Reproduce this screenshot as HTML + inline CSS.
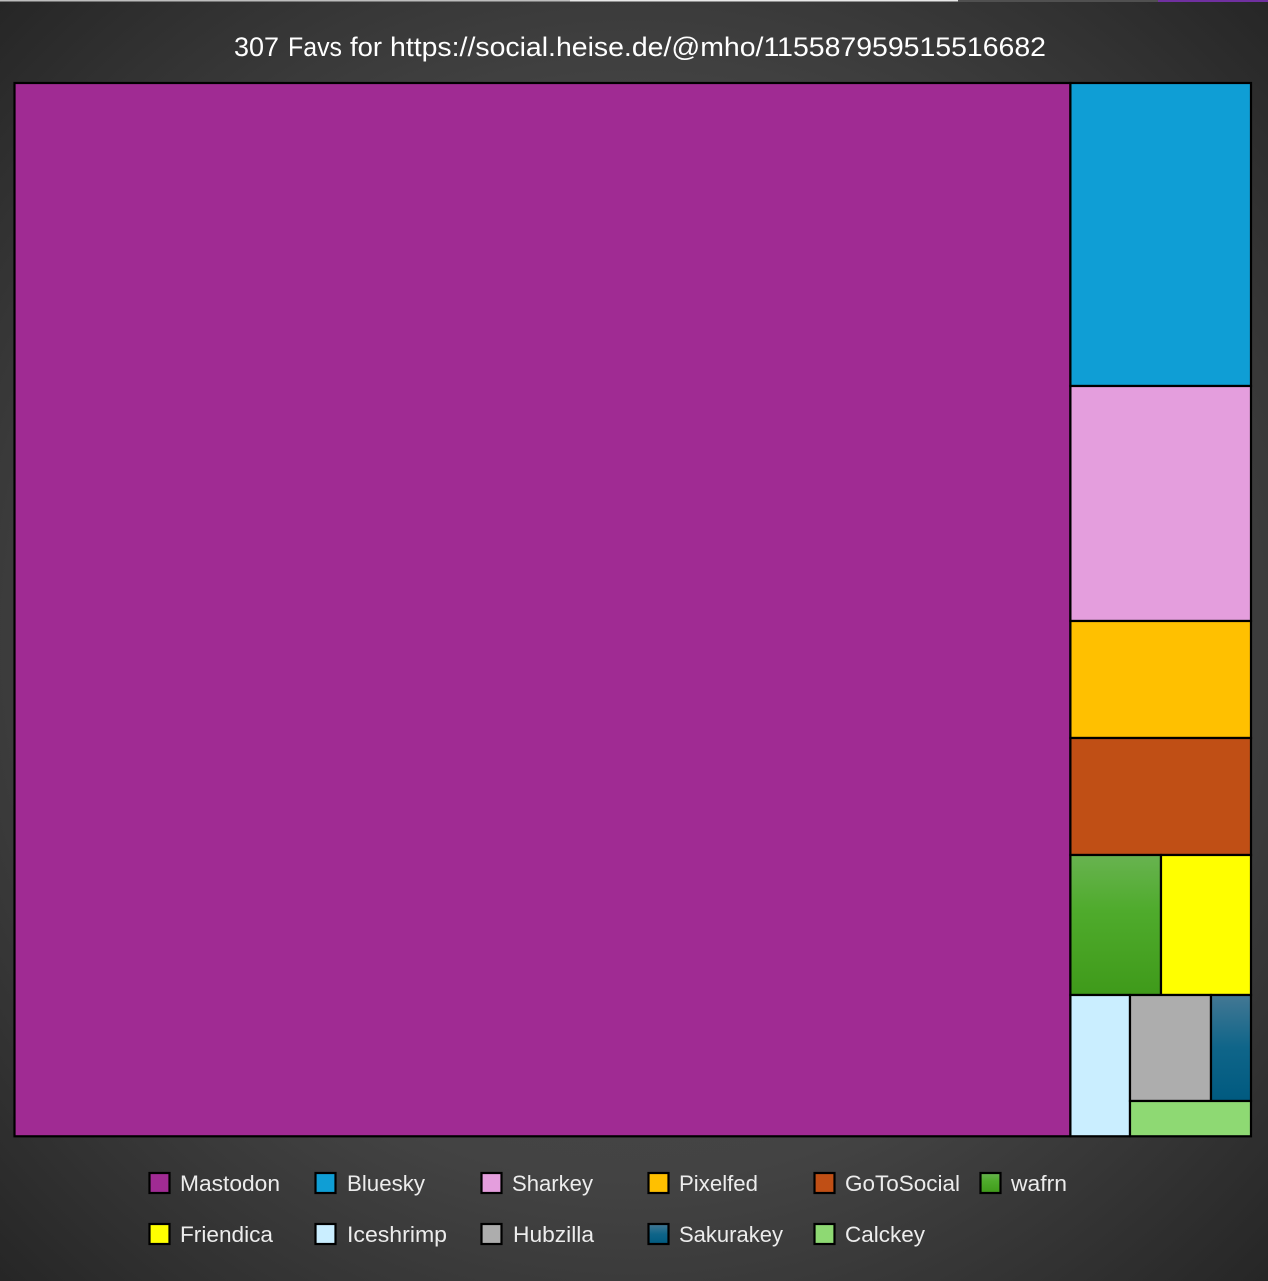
<!DOCTYPE html>
<html lang="en">
<head>
<meta charset="utf-8">
<title>307 Favs</title>
<style>
html,body{margin:0;padding:0;width:1268px;height:1281px;overflow:hidden;background:#3a3a3a}
svg{display:block}
text{font-family:"Liberation Sans",sans-serif;fill:#fff}
.l{font-size:22px;fill:#ececec}
.s{stroke:#000;stroke-width:2.2}
</style>
</head>
<body>
<svg width="1268" height="1281" viewBox="0 0 1268 1281" xmlns="http://www.w3.org/2000/svg">
<defs>
<radialGradient id="bg" gradientUnits="userSpaceOnUse" cx="634" cy="640" r="900">
<stop offset="0" stop-color="#4a4a4a"/>
<stop offset="0.6" stop-color="#434343"/>
<stop offset="1" stop-color="#262626"/>
</radialGradient>
<linearGradient id="gr" x1="0" y1="0" x2="0" y2="1">
<stop offset="0" stop-color="#68b350"/>
<stop offset="0.4" stop-color="#4fab2c"/>
<stop offset="1" stop-color="#3f9a1a"/>
</linearGradient>
<linearGradient id="bl" x1="0" y1="0" x2="0" y2="1">
<stop offset="0" stop-color="#447894"/>
<stop offset="0.5" stop-color="#0f6589"/>
<stop offset="1" stop-color="#005a80"/>
</linearGradient>
</defs>
<rect width="1268" height="1281" fill="url(#bg)"/>
<rect x="0" y="0" width="570" height="1.5" fill="#bdbdbd"/>
<rect x="570" y="0" width="388" height="1.5" fill="#e8e8e8"/>
<rect x="958" y="0" width="200" height="2" fill="#505050"/>
<rect x="1158" y="0" width="110" height="2" fill="#7030a0"/>

<text x="234" y="56" font-size="27" textLength="45" lengthAdjust="spacingAndGlyphs">307</text>
<text x="288" y="56" font-size="27" textLength="54" lengthAdjust="spacingAndGlyphs">Favs</text>
<text x="350" y="56" font-size="27" textLength="32" lengthAdjust="spacingAndGlyphs">for</text>
<text x="390" y="56" font-size="27" textLength="656" lengthAdjust="spacingAndGlyphs">https://social.heise.de/@mho/115587959515516682</text>

<rect class="s" x="14.500" y="83" width="1055.900" height="1053.300" fill="#a02b93"/>
<rect class="s" x="1070.400" y="83" width="180.600" height="303" fill="#0f9ed5"/>
<rect class="s" x="1070.400" y="386" width="180.600" height="235" fill="#e49edd"/>
<rect class="s" x="1070.400" y="621" width="180.600" height="117" fill="#ffc000"/>
<rect class="s" x="1070.400" y="738" width="180.600" height="117" fill="#c04f15"/>
<rect class="s" x="1070.400" y="855" width="90.600" height="140" fill="url(#gr)"/>
<rect class="s" x="1161" y="855" width="90" height="140" fill="#ffff00"/>
<rect class="s" x="1070.400" y="995" width="59.600" height="141.300" fill="#caeeff"/>
<rect class="s" x="1130" y="995" width="81" height="106" fill="#adadad"/>
<rect class="s" x="1211" y="995" width="40" height="106" fill="url(#bl)"/>
<rect class="s" x="1130" y="1101" width="121" height="35.300" fill="#8ed973"/>

<rect class="s" x="149.500" y="1173" width="20" height="20" fill="#a02b93"/>
<text class="l" x="180" y="1191" textLength="100" lengthAdjust="spacingAndGlyphs">Mastodon</text>
<rect class="s" x="315.500" y="1173" width="20" height="20" fill="#0f9ed5"/>
<text class="l" x="347" y="1191" textLength="78" lengthAdjust="spacingAndGlyphs">Bluesky</text>
<rect class="s" x="481.500" y="1173" width="20" height="20" fill="#e49edd"/>
<text class="l" x="512" y="1191" textLength="81" lengthAdjust="spacingAndGlyphs">Sharkey</text>
<rect class="s" x="648.500" y="1173" width="20" height="20" fill="#ffc000"/>
<text class="l" x="679" y="1191" textLength="79" lengthAdjust="spacingAndGlyphs">Pixelfed</text>
<rect class="s" x="814.500" y="1173" width="20" height="20" fill="#c04f15"/>
<text class="l" x="845" y="1191" textLength="115" lengthAdjust="spacingAndGlyphs">GoToSocial</text>
<rect class="s" x="980.500" y="1173" width="20" height="20" fill="url(#gr)"/>
<text class="l" x="1011" y="1191" textLength="56" lengthAdjust="spacingAndGlyphs">wafrn</text>

<rect class="s" x="149.500" y="1224" width="20" height="20" fill="#ffff00"/>
<text class="l" x="180" y="1242" textLength="93" lengthAdjust="spacingAndGlyphs">Friendica</text>
<rect class="s" x="315.500" y="1224" width="20" height="20" fill="#caeeff"/>
<text class="l" x="347" y="1242" textLength="100" lengthAdjust="spacingAndGlyphs">Iceshrimp</text>
<rect class="s" x="481.500" y="1224" width="20" height="20" fill="#adadad"/>
<text class="l" x="513" y="1242" textLength="81" lengthAdjust="spacingAndGlyphs">Hubzilla</text>
<rect class="s" x="648.500" y="1224" width="20" height="20" fill="url(#bl)"/>
<text class="l" x="679" y="1242" textLength="104" lengthAdjust="spacingAndGlyphs">Sakurakey</text>
<rect class="s" x="814.500" y="1224" width="20" height="20" fill="#8ed973"/>
<text class="l" x="845" y="1242" textLength="80" lengthAdjust="spacingAndGlyphs">Calckey</text>
</svg>
</body>
</html>
